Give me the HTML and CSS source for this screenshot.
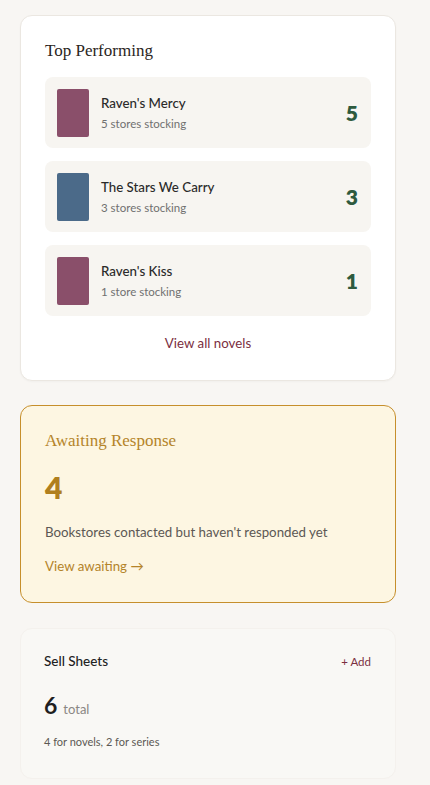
FILE: index.html
```html
<!DOCTYPE html>
<html lang="en">
<head>
<meta charset="utf-8">
<title>Dashboard</title>
<link rel="stylesheet" href="styles.css">
</head>
<body>
<main class="page">
  <section class="card top">
    <h2 class="serif-title">Top Performing</h2>
    <ul class="novels">
      <li class="novel">
        <span class="cover mauve"></span>
        <div class="info">
          <div class="name">Raven's Mercy</div>
          <div class="meta">5 stores stocking</div>
        </div>
        <span class="count">5</span>
      </li>
      <li class="novel">
        <span class="cover blue"></span>
        <div class="info">
          <div class="name">The Stars We Carry</div>
          <div class="meta">3 stores stocking</div>
        </div>
        <span class="count">3</span>
      </li>
      <li class="novel">
        <span class="cover mauve"></span>
        <div class="info">
          <div class="name">Raven's Kiss</div>
          <div class="meta">1 store stocking</div>
        </div>
        <span class="count">1</span>
      </li>
    </ul>
    <a class="view-all" href="#">View all novels</a>
  </section>

  <section class="card awaiting">
    <h2 class="serif-title gold">Awaiting Response</h2>
    <div class="big-num">4</div>
    <p class="desc">Bookstores contacted but haven't responded yet</p>
    <a class="gold-link" href="#">View awaiting →</a>
  </section>

  <section class="card sheets">
    <div class="sheets-head">
      <h3 class="sheets-title">Sell Sheets</h3>
      <a class="add" href="#">+ Add</a>
    </div>
    <div class="total"><span class="total-num">6</span><span class="total-label">total</span></div>
    <p class="small">4 for novels, 2 for series</p>
  </section>
</main>
</body>
</html>
```

FILE: styles.css
```css
* { box-sizing: border-box; }
html, body { margin: 0; padding: 0; }
body {
  background: #f8f6f3;
  font-family: "Lato", "Open Sans", sans-serif;
  color: #2a2a2a;
}
.page {
  width: 430px;
  padding: 15px 34px 20px 20px;
  display: flex;
  flex-direction: column;
}
.card {
  border-radius: 12px;
}
.top {
  background: #ffffff;
  border: 1px solid #ebe7e1;
  padding: 24px 24px 28px 24px;
  box-shadow: 0 1px 2px rgba(0,0,0,0.03);
}
.serif-title {
  margin: 0;
  font-family: "Liberation Serif", "DejaVu Serif", serif;
  font-weight: 400;
  font-size: 17px;
  line-height: 22px;
  color: #2a2522;
}
.novels {
  list-style: none;
  margin: 15px 0 0 0;
  padding: 0;
  display: flex;
  flex-direction: column;
  gap: 13px;
}
.novel {
  background: #f7f5f1;
  border-radius: 8px;
  height: 71px;
  padding: 0 13px 0 12px;
  display: flex;
  align-items: center;
  gap: 12px;
}
.cover {
  width: 32px;
  height: 48px;
  border-radius: 2px;
  flex: none;
}
.mauve { background: #8a4f6a; }
.blue { background: #4b6a89; }
.info {
  flex: 1;
  display: flex;
  flex-direction: column;
  gap: 4px;
  padding-top: 2px;
}
.name {
  font-size: 13.3px;
  line-height: 17px;
  font-weight: 500;
  color: #2a2a2a;
}
.meta {
  font-size: 11.5px;
  line-height: 16px;
  color: #707070;
}
.count {
  font-size: 21px;
  font-weight: 800;
  color: #2e5a3e;
}
.view-all {
  display: block;
  text-align: center;
  margin-top: 18px;
  font-size: 13.3px;
  line-height: 18px;
  color: #7b2f3f;
  text-decoration: none;
}
.awaiting {
  margin-top: 24px;
  background: #fdf6e2;
  border: 1px solid #c68f2c;
  padding: 24px 24px 27px 24px;
}
.gold { color: #b4842a; }
.big-num {
  margin-top: 18px;
  font-size: 30px;
  line-height: 34px;
  font-weight: 800;
  color: #b07f1e;
}
.desc {
  margin: 19px 0 0 0;
  font-size: 13.3px;
  line-height: 18px;
  color: #5c5854;
}
.gold-link {
  display: block;
  margin-top: 16px;
  font-size: 13.3px;
  line-height: 18px;
  color: #b4842a;
  text-decoration: none;
}
.sheets {
  margin-top: 25px;
  background: #f9f8f5;
  border: 1px solid #f4f1ed;
  padding: 23px 24px 29px 23px;
}
.sheets-head {
  display: flex;
  justify-content: space-between;
  align-items: center;
}
.sheets-title {
  margin: 0;
  font-size: 13.5px;
  line-height: 18px;
  font-weight: 500;
  color: #222;
}
.add {
  font-size: 11.5px;
  color: #7b2f3f;
  text-decoration: none;
}
.total {
  margin-top: 22px;
  display: flex;
  align-items: baseline;
  gap: 6px;
}
.total-num {
  font-size: 23px;
  line-height: 26px;
  font-weight: 700;
  color: #1f1f1f;
}
.total-label {
  font-size: 13px;
  color: #8a8683;
}
.small {
  margin: 16px 0 0 0;
  font-size: 11px;
  line-height: 15px;
  color: #5c5854;
}
```
